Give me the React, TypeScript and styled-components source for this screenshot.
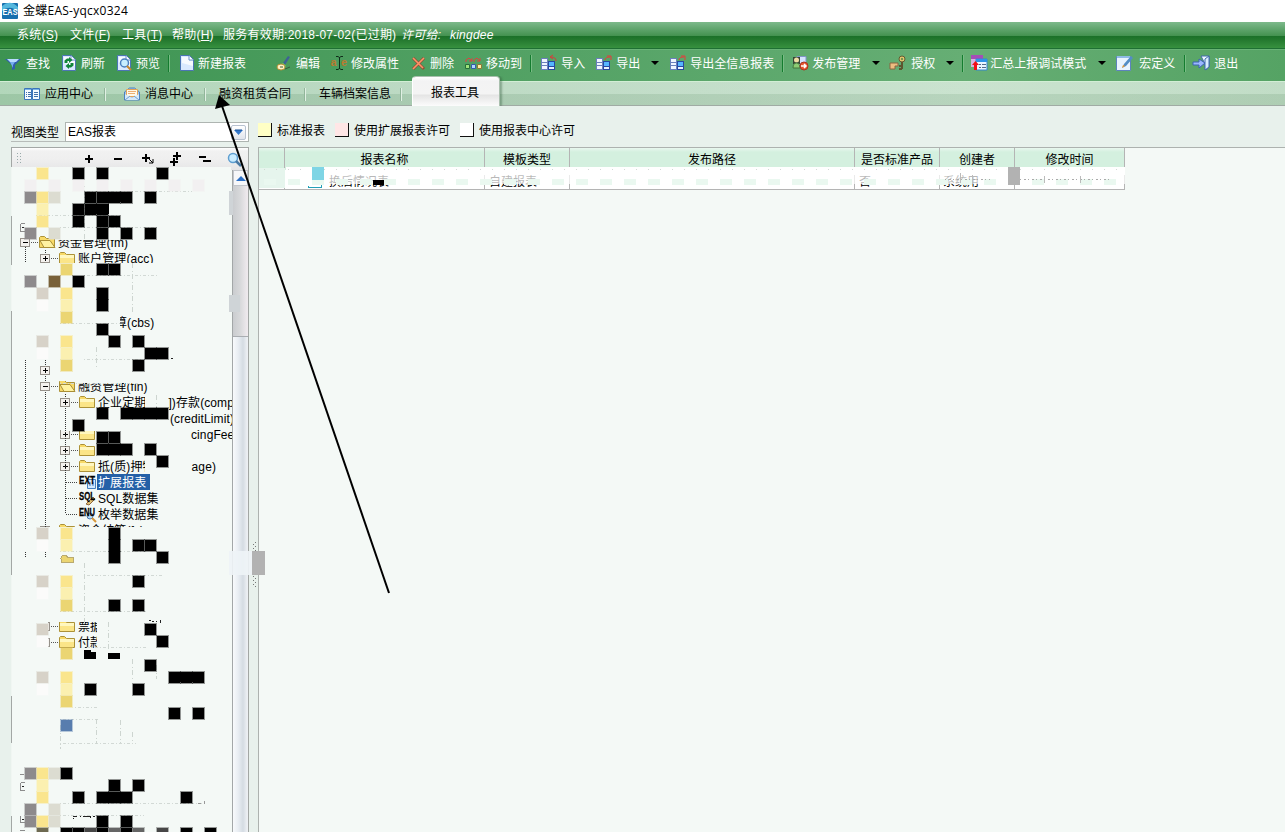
import React from "react";
import styled, { createGlobalStyle, css } from "styled-components";

const Global = createGlobalStyle`
  * { box-sizing: border-box; }
  body { margin: 0; overflow: hidden; }
  svg { display: block; flex-shrink: 0; }
`;

const Window = styled.div`
  position: relative;
  display: flex;
  flex-direction: column;
  width: 1285px;
  height: 832px;
  overflow: hidden;
  background: #e8f1ec;
  color: #000;
  font: 12px/16px "Liberation Sans", "Noto Sans CJK SC", sans-serif;
  white-space: nowrap;
`;

/* ---------- title and menu ---------- */
const TitleBar = styled.header`
  display: flex;
  align-items: center;
  flex: 0 0 22px;
  gap: 5px;
  padding-left: 2px;
  background: #fff;
  font: 12px/20px "Open Sans", "Noto Sans CJK SC", sans-serif;
  letter-spacing: 0.25px;
`;
const MenuBar = styled.nav`
  display: flex;
  flex: 0 0 27px;
  padding: 5px 0 0 17px;
  color: #fff;
  border-bottom: 1px solid #1f7034;
  background: linear-gradient(#7db98b 0, #43914f 14px, #1b7029 14px, #24792f 18px, #37913f 26px);
  letter-spacing: 0.22px;
`;
const MenuItem = styled.span<{ $w: number; $italic?: boolean }>`
  width: ${(p) => p.$w}px;
  font-style: ${(p) => (p.$italic ? "italic" : "normal")};
`;

/* ---------- toolbar ---------- */
const ToolBar = styled.div`
  display: flex;
  align-items: center;
  flex: 0 0 32px;
  padding: 0 0 5px 5px;
  color: #fff;
  border-top: 1px solid #69b377;
  background: linear-gradient(90deg, #3c9351 0, #50a062 36%, #66ae74 75%, #55a364 100%);
`;
const ToolButton = styled.span<{ $before: number; $gap: number }>`
  display: flex;
  align-items: center;
  height: 20px;
  margin-left: ${(p) => p.$before}px;
  gap: ${(p) => p.$gap}px;
`;
const ToolText = styled.span`
  padding-top: 2px;
`;
const ToolSeparator = styled.i<{ $before: number }>`
  width: 2px;
  height: 17px;
  margin-left: ${(p) => p.$before}px;
  background: linear-gradient(90deg, #147c2f 50%, #79bd85 50%);
`;
const Caret = styled.i<{ $before: number }>`
  margin-left: ${(p) => p.$before}px;
  border: 4px solid transparent;
  border-top-color: #000;
  border-bottom: 0;
`;

/* ---------- tabs ---------- */
const TabBar = styled.div`
  display: flex;
  flex: 0 0 25px;
  min-height: 0;
  padding-left: 12px;
  border-top: 1px solid #d2eed5;
  border-bottom: 1px solid #a0aba4;
  background: linear-gradient(rgba(255,255,255,0.14) 12px, rgba(0,30,0,0.05) 12px),
    linear-gradient(90deg, #a5d0af 0, #b3d4bb 36%, #c1dec7 75%, #b7d7bd 100%);
`;
const Tab = styled.div<{ $w: number; $pad: number; $active?: boolean }>`
  display: flex;
  align-items: center;
  width: ${(p) => p.$w}px;
  height: 23px;
  padding-left: ${(p) => p.$pad}px;
  gap: 5px;
  ${(p) =>
    p.$active
      ? css`
          height: 30px;
          margin: -6px 0 0 6px;
          padding-top: 2px;
          border: 1px solid #a9bfae;
          border-left-color: #fff;
          border-bottom: 0;
          border-radius: 4px 4px 0 0;
          background: linear-gradient(#fff 0, #f3f3f4 4px, #f4f4f4 17px, #e4e4e4 18px, #fcfcfc 29px);
          box-shadow: 2px 0 2px rgba(50, 90, 60, 0.4);
          clip-path: inset(0 -5px 0 -1px);
        `
      : css`
          background: linear-gradient(#91b59a, #91b59a) right 5px top 6px / 1px 13px no-repeat,
            linear-gradient(#e1f0e4, #e1f0e4) right 4px top 6px / 1px 13px no-repeat;
        `}
`;

/* ---------- left side ---------- */
const Body = styled.div`
  display: flex;
  flex: 1;
  min-height: 0;
`;
const Sidebar = styled.aside`
  display: flex;
  flex-direction: column;
  flex: 0 0 249px;
  min-width: 0;
  padding: 16px 0 0 11px;
`;
const FilterRow = styled.div`
  display: flex;
  flex: 0 0 20px;
  margin-bottom: 5px;
`;
const FilterLabel = styled.label`
  width: 54px;
  padding-top: 3px;
  border-bottom: 1px solid #b7bcb9;
`;
const Select = styled.div`
  display: flex;
  justify-content: space-between;
  align-items: center;
  flex: 1;
  padding: 0 2px;
  border: 1px solid #aeb5b1;
  background: #fff;
`;
const SelectArrow = styled.span`
  display: flex;
  align-items: center;
  justify-content: center;
  width: 15px;
  height: 15px;
  border: 1px solid #b8c2d0;
  border-radius: 2px;
  background: linear-gradient(#fff, #e1e5ed);
`;
const TreePanel = styled.section`
  display: flex;
  flex-direction: column;
  flex: 1;
  min-width: 0;
  min-height: 0;
  border: 1px solid #a3a7a5;
  border-bottom: 0;
  background: #f4f9f6;
`;
const TreeTools = styled.div`
  flex: 0 0 22px;
  background: linear-gradient(#fff, #f1f1f1 3px, #efefef 11px, #e6e6e7 22px);
`;
const TreeBody = styled.div`
  display: flex;
  flex: 1;
  min-width: 0;
  min-height: 0;
`;
const Tree = styled.div`
  flex: 1;
  min-width: 0;
  overflow: hidden;
`;
const TreeRow = styled.div<{ $depth: number }>`
  display: flex;
  align-items: center;
  height: 16px;
  padding-left: ${(p) => 8 + p.$depth * 20}px;
  letter-spacing: 0.1px;
`;
const Toggle = styled.span<{ $hidden?: boolean }>`
  display: flex;
  flex: 0 0 19px;
  height: 16px;
  align-items: center;
  visibility: ${(p) => (p.$hidden ? "hidden" : "visible")};
`;
const TreeLabel = styled.span<{ $selected?: boolean; $gap?: number }>`
  flex: none;
  height: 16px;
  margin-left: ${(p) => p.$gap ?? 0}px;
  padding: 0 ${(p) => (p.$selected ? 4 : 0)}px 0 1px;
  line-height: 18px;
  color: ${(p) => (p.$selected ? "#fff" : "#000")};
  background: ${(p) => (p.$selected ? "#2460a7" : "transparent")};
`;
const ScrollBar = styled.div`
  display: flex;
  flex-direction: column;
  flex: 0 0 16px;
  border-left: 1px solid #a3a7a8;
  background: linear-gradient(90deg, #f8fafc, #e9eef3 5px, #d5dce3 10px, #eceff3 14px);
`;
const ScrollUp = styled.span`
  display: flex;
  align-items: center;
  justify-content: center;
  height: 16px;
  border: 1px solid #c1c5cb;
  background: #f6f7f9;
`;
const ScrollThumb = styled.span`
  height: 151px;
  border-bottom: 1px solid #a9adb1;
  background: linear-gradient(90deg, #cacccf, #d7d8da 7px, #eee9ed 14px);
`;

/* ---------- report list ---------- */
const Content = styled.main`
  display: flex;
  flex-direction: column;
  flex: 1;
  min-width: 0;
  padding: 16px 0 0 9px;
`;
const Legend = styled.div`
  display: flex;
  flex: 0 0 25px;
  padding-top: 1px;
`;
const LegendItem = styled.span<{ $w: number }>`
  display: flex;
  gap: 5px;
  width: ${(p) => p.$w}px;
`;
const Swatch = styled.i<{ $color: string }>`
  width: 14px;
  height: 14px;
  border-right: 1px solid #111;
  border-bottom: 1px solid #111;
  background: ${(p) => p.$color};
`;
const Grid = styled.section`
  flex: 1;
  border-top: 1px solid #adb2af;
  border-left: 1px solid #adb2af;
  background: #f4f9f6;
`;
const GridRow = styled.div<{ $head?: boolean }>`
  display: grid;
  grid-template-columns: 26px 200px 85px 285px 85px 75px 110px;
  width: 866px;
  height: ${(p) => (p.$head ? 22 : 20)}px;
  text-align: ${(p) => (p.$head ? "center" : "left")};
  line-height: 24px;
  background: ${(p) => (p.$head ? "linear-gradient(#e9f7ef 0, #d4f0df 4px)" : "#fff")};
  border-bottom: ${(p) => (p.$head ? "0" : "1px solid #b4b4b4")};
`;
const Cell = styled.span<{ $pad?: number }>`
  overflow: hidden;
  padding-left: ${(p) => p.$pad ?? 0}px;
  border-right: 1px solid #b4b4b4;
`;
const Overlay = styled.svg`
  position: absolute;
  inset: 0;
  pointer-events: none;
`;

/* ---------- icons ---------- */
const sheet = (
  <>
    <path d="M1.5 .5h9l4 4v11h-13z" fill="#d9e9ff" stroke="#4c75b5" />
    <path d="M3 2h7v4h4v5L3 8z" fill="#f6faff" />
    <path d="M10 1v4h4" fill="#fff" stroke="#6d91c5" />
  </>
);
const table = (
  <>
    <path d="M0 3h7v12H0z" fill="#6a80bc" />
    <path d="M7 6h7v9H7z" fill="#2948a0" />
    <path d="M1 4h5v3H1zm0 4h5v2H1zm0 3h5v3H1z" fill="#f0f5ff" />
    <path d="M8 7h5v4H8z" fill="#55b6ff" />
    <path d="M8 12h5v2H8z" fill="#e9f3ff" />
  </>
);
const glyphs: Record<string, React.ReactNode> = {
  eas: (
    <>
      <rect width="16" height="16" rx="1" fill="#176fae" />
      <path d="M0 3Q8-4 16 4v5Q8 1 0 8" fill="#55b8de" />
      <text x="0.5" y="12" fontSize="8.5" textLength="15" lengthAdjust="spacingAndGlyphs" letterSpacing="0" fontWeight="700" fill="#fff" fontFamily="Liberation Sans">EAS</text>
    </>
  ),
  filter: (
    <>
      <path d="M0 4h16l-6 6v4l-3 1v-5z" fill="#315eac" />
      <path d="M2 4h12l-3 3H5z" fill="#b8dcff" />
      <path d="M5 7h5L8 10v3" fill="#75adf0" />
    </>
  ),
  refresh: (
    <>
      {sheet}
      <path d="M3.5 8V5.5L6 3.5h2V2l3.5 3L8 8V6H6.5v2zM12.5 8v2.500L10 12.500H8V14l-3.500-3L8 8v2h1.500V8z" fill="#11863a" />
    </>
  ),
  preview: (
    <>
      {sheet}
      <circle cx="8.5" cy="8" r="4" fill="#c7edff" stroke="#4a7fc0" strokeWidth="1.5" />
      <path d="m11 11 4 4" stroke="#c8852b" strokeWidth="2" />
    </>
  ),
  page: sheet,
  edit: (
    <>
      <path d="m12 1-5 7 2 2 5-8z" fill="#3e6394" />
      <path d="m7 8 3 3-2 1-3-2z" fill="#7ddb57" />
      <ellipse cx="5" cy="12" rx="4" ry="3" fill="#fff3c3" stroke="#af8e35" />
      <path d="M4 12h3M9 14l5-2" stroke="#365b3d" />
    </>
  ),
  rename: (
    <>
      <text x="-0.5" y="11" fontSize="11" fontWeight="700" fill="#b97a30" fontFamily="Liberation Sans">a</text>
      <text x="10" y="11" fontSize="11" fontWeight="700" fill="#b97a30" fontFamily="Liberation Sans">e</text>
      <path d="M5 1.5h2l1.500 1 1.500-1h2M8.500 2v12M5 14.500h2l1.500-1 1.500 1h2" stroke="#102d1a" fill="none" />
    </>
  ),
  remove: (
    <>
      <path d="m2 3 11 11M13 3 2 14" stroke="#8f5137" strokeWidth="3" />
      <path d="m2 3 10 10M13 3 2 14" stroke="#ff9368" strokeWidth="1.6" />
    </>
  ),
  move: (
    <>
      <path d="M1 7V5l3-2 3 3m0-3v3H4M9 7V5l3-2 3 3m0-3v3h-3" fill="none" stroke="#e04040" />
      <path d="M.5 9.500h4v4h-4z" fill="#9ee37a" stroke="#277039" />
      <path d="M6.500 9.500h4v4h-4z" fill="#b2d6ff" stroke="#345caa" />
      <path d="M12.500 9.500h4v4h-4z" fill="#fff0a0" stroke="#8e7838" />
    </>
  ),
  import: (
    <>
      {table}
      <path d="M15 6q0-4-5-4M12 0l-3 2 3 2" fill="none" stroke="#d73b3b" />
    </>
  ),
  export: (
    <>
      {table}
      <path d="M9 5q0-3 5-3M11 1h4v4" fill="none" stroke="#e73b3b" />
    </>
  ),
  publish: (
    <>
      <path d="M4 1.500h9v9H4z" fill="#d4e3ff" stroke="#8194c7" />
      <path d="M0 2h7v7H0z" fill="#374536" />
      <circle cx="3.5" cy="5" r="2.5" fill="#f1dda5" />
      <path d="M0 13q0-5 3.500-5T7 13z" fill="#8dcd75" stroke="#45763d" />
      <circle cx="11" cy="11" r="4" fill="#e65530" stroke="#a73523" />
      <path d="M8 11h5m-2-2 2 2-2 2" stroke="#fff" strokeWidth="1.5" fill="none" />
    </>
  ),
  key: (
    <>
      <circle cx="12" cy="4" r="3" fill="#dec46c" stroke="#625b32" />
      <path d="M12 7v7m0-3h-3m3 3H9" stroke="#5d552e" strokeWidth="2" />
      <path d="M0 8h8v3H5v3H0z" fill="#edbd80" stroke="#8c6540" />
      <circle cx="12" cy="4" r="1" fill="#558348" />
    </>
  ),
  report: (
    <>
      <path d="M0 0h12v12H0z" fill="#d7b4e1" />
      <path d="M0 0h12v4H0z" fill="#a54eb7" />
      <path d="M5 4h11v11H5z" fill="#eaf5ff" stroke="#3585d1" />
      <path d="M5 4h11v3H5z" fill="#2e94e7" />
      <path d="M8 9.500h2m1 0h4m-7 3h2m1 0h4" stroke="#536b8b" />
      <path d="M3 15V10H1l3.500-4L8 10H6v5z" fill="#f10f18" />
    </>
  ),
  macro: (
    <>
      <path d="M.5 1.500h14v14H.5z" fill="#e9f4ff" stroke="#5d83bd" />
      <path d="M1 1h13v2H1z" fill="#8fbae5" />
      <path d="m15 1-7 8-2 4 4-2 7-8z" fill="#538dc5" />
      <path d="m7 10-1 3 3-2" fill="#ef9a2b" />
    </>
  ),
  exit: (
    <>
      <path d="M8 1h8v11l-3 3-2-8z" fill="#edf6ff" stroke="#426bac" />
      <path d="M16 1v11l-4 3V4z" fill="#d9edff" stroke="#426bac" />
      <path d="M0 7h6V4l6 4-6 5v-3H0z" fill="#9bb8ff" stroke="#3d63b2" />
    </>
  ),
  apps: (
    <>
      <path d="M.5 2.500h7v11h-7zM8.500 2.500h7v11h-7z" fill="#f5fbff" stroke="#3b75ba" />
      <path d="M1 3.500h6M9 3.500h6" stroke="#79b4e6" />
      <path d="M2 6.500h1m1 0h3m-5 2h1m1 0h3m-5 2h1m1 0h3m3-4h4m-4 2h4m-4 2h4" stroke="#4170a9" />
    </>
  ),
  mail: (
    <>
      <path d="m.5 6 5-4h5l5 4v8H.5z" fill="#9fc4ed" stroke="#4b80bf" />
      <path d="M2.500 3.500h11v7h-11z" fill="#fff9e9" stroke="#e2a359" />
      <path d="M4 5.500h8M4 7.500h7" stroke="#edae74" />
      <path d="m1 8 7 4 7-4v6H1z" fill="#d4e8fa" />
      <path d="m1 14 5-4m9 4-5-4" stroke="#6e9dcf" />
    </>
  ),
};
const Icon = ({ name }: { name: string }) => (
  <svg width="16" height="16" viewBox="0 0 16 16" overflow="visible">{glyphs[name]}</svg>
);
const Down = () => (
  <svg width="9" height="6"><path d="M0 1h9L4.5 6z" fill="#3478cc" /><path d="M1 1h7" stroke="#134f96" /></svg>
);
const PlusMinus = ({ open }: { open?: boolean }) => (
  <svg width="19" height="16">
    <rect x="0.5" y="4.5" width="9" height="8" fill="#f4f2ee" stroke="#96918a" />
    <path d={open ? "M3 8.5h5" : "M3 8.5h5M5.5 6v5"} stroke="#000" />
    <path d="M11 8.5h7" stroke="#555" strokeDasharray="1 1" />
  </svg>
);
const Folder = ({ open }: { open?: boolean }) => (
  <svg width="18" height="16">
    <path d="M.5 13.5v-10l1-1h4l2 2h8v9z" fill="#f8da68" stroke="#ac9238" />
    {open ? (
      <path d="M1 6.5h10l5 7H5z" fill="#fff2a1" stroke="#a98e36" />
    ) : (
      <>
        <path d="M1 6h14v7H1z" fill="#fbe588" />
        <path d="M1 5h14v3H1z" fill="#fff7bf" />
      </>
    )}
  </svg>
);
const squeeze: Record<string, number> = { EXT: 0.75, SQL: 0.71, ENU: 0.69 };
const DataIcon = ({ kind }: { kind: string }) => (
  <svg width="18" height="16" overflow="visible">
    {kind === "EXT" && <path d="M8.5 5.5h8v9h-8zM11 8v4m3-4v4" fill="#d3e9ff" stroke="#4681c0" />}
    {kind === "SQL" && <path d="m14 7-7 7 3 1 6-6z" fill="#e6c275" stroke="#8e6940" />}
    {kind === "ENU" && <><circle cx="11" cy="10" r="3" fill="#b7dcfa" stroke="#4e7cb1" /><path d="m13 12 4 4" stroke="#d7973a" strokeWidth="2" /></>}
    <text transform={`scale(${squeeze[kind]} 1)`} x="0" y="10" fontSize="11" fontWeight="700" letterSpacing="0" stroke="#000" strokeWidth="0.3" fontFamily="Liberation Sans">{kind}</text>
  </svg>
);

type Tool = { kind?: "sep" | "caret"; before: number; gap?: number; icon?: string; text?: string };
const tools: Tool[] = [
  { before: 0, gap: 5, icon: "filter", text: "查找" },
  { before: 11, gap: 4, icon: "refresh", text: "刷新" },
  { before: 11, gap: 4, icon: "preview", text: "预览" },
  { kind: "sep", before: 8 },
  { before: 9, gap: 3, icon: "page", text: "新建报表" },
  { before: 30, gap: 4, icon: "edit", text: "编辑" },
  { before: 11, gap: 4, icon: "rename", text: "修改属性" },
  { before: 12, gap: 3, icon: "remove", text: "删除" },
  { before: 11, gap: 5, icon: "move", text: "移动到" },
  { kind: "sep", before: 8 },
  { before: 9, gap: 4, icon: "import", text: "导入" },
  { before: 11, gap: 4, icon: "export", text: "导出" },
  { kind: "caret", before: 11 },
  { before: 11, gap: 4, icon: "export", text: "导出全信息报表" },
  { kind: "sep", before: 8 },
  { before: 9, gap: 3, icon: "publish", text: "发布管理" },
  { kind: "caret", before: 12 },
  { before: 10, gap: 5, icon: "key", text: "授权" },
  { kind: "caret", before: 11 },
  { kind: "sep", before: 8 },
  { before: 7, gap: 3, icon: "report", text: "汇总上报调试模式" },
  { kind: "caret", before: 12 },
  { before: 10, gap: 7, icon: "macro", text: "宏定义" },
  { kind: "sep", before: 9 },
  { before: 7, gap: 5, icon: "exit", text: "退出" },
];

type Node = { depth: number; text?: string; open?: boolean; leaf?: string; folder?: boolean; rest?: string; gap?: number };
const nodes: (Node | null)[] = [
  null, null, null, null,
  { depth: 0, text: "资金管理(fm)", open: true },
  { depth: 1, text: "账户管理(acc)" },
  null, null, null,
  { depth: 2, folder: false, rest: "算(cbs)", gap: 35 },
  null, null,
  { depth: 1, folder: false },
  { depth: 1, text: "融资管理(fin)", open: true },
  { depth: 2, text: "企业定期", rest: "])存款(comp", gap: 21 },
  { depth: 2, folder: false, rest: "(creditLimit)", gap: 90 },
  { depth: 2, rest: "cingFee", gap: 93 },
  { depth: 2 },
  { depth: 2, text: "抵(质)押物", rest: "age)", gap: 36 },
  { depth: 2, text: "扩展报表", leaf: "EXT" },
  { depth: 2, text: "SQL数据集", leaf: "SQL" },
  { depth: 2, text: "枚举数据集", leaf: "ENU" },
  { depth: 1, text: "资金结算(fs)" },
  null, null, null, null, null,
  { depth: 1, text: "票据" },
  { depth: 1, text: "付款" },
];

/* Covered areas of the tree: x, y, width, height */
const covers = [
  [12, 167, 219, 69], [56, 236, 175, 4], [12, 263, 219, 53], [12, 310, 108, 50], [120, 331, 111, 29],
  [50, 355, 181, 26], [76, 381, 155, 2], [145, 395, 23, 13], [61, 408, 108, 23], [168, 427, 21, 12], [145, 456, 46, 18],
  [12, 527, 219, 30], [12, 564, 219, 58], [12, 622, 36, 38], [97, 618, 80, 42],
  [12, 650, 219, 182],
];

const inks: Record<string, string> = {
  k: "#000", g: "#8d8a8c", y: "#fae58d", l: "#fbf0b0", o: "#ebd572", b: "#d7d2c8",
  s: "#dcdcd1", w: "#fbfbfa", n: "#786139", u: "#587dae", f: "#f2f0f1", d: "#474747", m: "#656565", v: "#6e6a51",
};
/* Each string begins at x = 24 and advances one 12px cell per character. */
const mosaic: [number, string][] = [
  [167, ".y..k.k....k"],
  [179, "f.f.f.f.f.f.f.f"],
  [191, "gys..kkkk.k"],
  [203, ".l..kkk"],
  [215, ".y..k.kk"],
  [227, "g.s...k.k.k"],
  [263, "...o..kk"],
  [275, "g.n.k"],
  [287, ".b.y..k"],
  [299, ".w.l..k"],
  [311, "...o"],
  [323, "......k"],
  [335, ".b.y...k.k"],
  [347, ".w.l......kk"],
  [359, "...o.....k"],
  [407, "......k.kkkk"],
  [419, "....k"],
  [431, "......kk"],
  [443, "......kkk.k"],
  [455, "...........k"],
  [527, ".b.y...k"],
  [539, ".w.l...k.kk"],
  [551, ".......k...k"],
  [575, ".b.y.....k"],
  [587, ".w.l"],
  [599, "...o...k.k"],
  [623, ".b........k"],
  [635, ".w.........k"],
  [647, "...o"],
  [659, "..........k"],
  [671, ".b.y........kkk"],
  [683, ".w.l.k...k"],
  [695, "...o"],
  [707, "............k.k"],
  [719, "...u"],
  [767, "gysk"],
  [779, ".l.....k.k"],
  [791, ".y..k.kkk....k"],
  [803, "g.s"],
  [815, "gys...k.k"],
  [827, ".v.kkdkmkm.d.k.k"],
];

const Mosaic = () => (
  <Overlay width="1285" height="832" shapeRendering="crispEdges">
    {covers.map(([x, y, w, h], i) => <rect key={i} x={x} y={y} width={w} height={h} fill="#f4f9f6" />)}
    <path d="M11.5 167v49M11.5 265v46M11.5 575v121M11.5 743v73" stroke="#f0f6f2" />
    <path d="M25.5 247v16M45.5 250v4M45.5 360v6M45.5 376v6M25.5 360v170M45.5 392v136M65.5 394v4M65.5 408v106M25.5 552v6M45.5 552v6" stroke="#333" strokeDasharray="1 1" />
    <path d="M66 482.5h12M66 498.5h12M66 514.5h12" stroke="#444" strokeDasharray="1 1" />
    <path d="M84 191h108M36 215h84M60 227h98M84 275h74M60 323h60M84 359h58M60 383h80M60 551h87M84 575h79M60 611h86M84 647h62M75 707h24M60 719h38M60 743h76M60 803h145M60 815h84" stroke="#d2d9d5" strokeDasharray="1 2 3 2" />
    <path d="M84.5 239v-55M132.5 263v50M96.5 347v20M156.5 395v14M84.5 563v60M108.5 622v28M132.5 659v20M156.5 665v14M60.5 725v24M96.5 719v25M120.5 720v23M132.5 732v10" stroke="#cdd5d0" strokeDasharray="5 3 1 2" />
    {mosaic.map(([y, row]) =>
      row.split("").map((c, i) =>
        c === "." ? null : (
          <g key={`${y}-${i}`}>
            <rect x={24 + i * 12} y={y} width="13" height="13" fill={inks[c]} opacity="0.4" />
            <rect x={25 + i * 12} y={y + 1} width="11" height="11" fill={inks[c]} />
          </g>
        )
      )
    )}
    <path d="M97 192h23v11H97zM85 204h24v10H85zM97 192h35v10H97zM121 408h47v11h-47zM97 444h35v11H97zM169 672h35v10h-35zM97 792h35v11H97zM145 348h23v11h-23zM97 288h11v22H97zM109 528h11v34h-11z" fill="#000" />
    <path d="M61 562.5v-4q0-3 2-3h3l2 2h5v5z" fill="#ebd572" stroke="#b9aa70" />
    <path d="M84 650h7v2h5v7H84zM108 653h12v6h-12z" fill="#000" />
    <path d="M20.5 223.5v8m0-8h4m-4 8h4M20.5 782.5v8m0-8h4m-4 8h4M20.5 815.5v7h4M20.5 831v-1h4M20 774.5h4" stroke="#8c8c8c" fill="none" />
    <path d="M22 227.5h2M22 786.5h2M22 819.5h2M73 816.5h4m3 0h1m2 0h8m2 0h2M73 818v1m17-3v2M171 358.5h2M149 620h2m1 1h2m2 0h1m3-1v3" stroke="#222" fill="none" />
    <path d="M198 803.5h3m3 0v-3" stroke="#999" fill="none" />
    <path d="M229 191h4v24h-4zM229 295h11v17h-11z" fill="#cfd4d7" />
    <path d="M229 551h23v24h-23z" fill="#eef3f6" opacity="0.92" />
    <path d="M252 551h13v24h-13z" fill="#b2b2b2" />
    <path d="M253.5 544v7M255.5 542v9M253.5 576v10M255.5 578v9" stroke="#777" strokeDasharray="1 3" />

    <path d="M259 168h26v20h-26z" fill="#e6f5ed" />
    <path d="M286 167h839v8H286z" fill="#fff" />
    <path d="M286 175h839v9H286z" fill="#fff" opacity="0.72" />
    {Array.from({ length: 36 }, (_, i) => (
      <rect key={i} x={264 + i * 24} y="179" width="12" height="6" fill="#eaf8f0" />
    ))}
    <path d="M264 169.5h860" stroke="#d3d8d5" strokeDasharray="1 11" />
    <path d="M312 167h12v13h-12z" fill="#7fd5e5" />
    <path d="M308.5 186v1h13v-2" stroke="#239fb7" fill="none" />
    <path d="M373 180h11v5h-11z" fill="#000" />
    <path d="M1008 167h12v18h-12z" fill="#b2b2b2" />
    <path d="M945 179.5h45M1020 179.5h90" stroke="#aaa" strokeDasharray="1 3 2 2" />
    <path d="M960.5 173v10M972.5 175v9M1044.5 176v7M1080.5 176v7" stroke="#bbb" />
  </Overlay>
);

const TreeCommandIcons = () => (
  <svg width="236" height="22">
    <path d="M5.5 5v12M8.5 5v12" stroke="#9aa" strokeDasharray="1 2" />
    <g stroke="#000" strokeWidth="2" shapeRendering="crispEdges">
      <path d="M73 11h8M77 7v8M102 11h8M130 10h8M134 6v8M158 14h8M162 10v8M161 8h8M165 4v8M187 9h7M191 13h8" />
    </g>
    <path d="m137 11 4 4m0-4v4h-4" stroke="#000" fill="none" />
    <circle cx="221" cy="10" r="4.5" fill="#caecff" stroke="#5e9ed0" strokeWidth="1.5" />
    <path d="m224 13 5 5" stroke="#4b7aa4" strokeWidth="2.5" />
  </svg>
);

export default function App() {
  return (
    <Window>
      <Global />
      <TitleBar><Icon name="eas" />金蝶EAS-yqcx0324</TitleBar>
      <MenuBar>
        <MenuItem $w={53}>系统(<u>S</u>)</MenuItem>
        <MenuItem $w={52}>文件(<u>F</u>)</MenuItem>
        <MenuItem $w={50}>工具(<u>T</u>)</MenuItem>
        <MenuItem $w={51}>帮助(<u>H</u>)</MenuItem>
        <MenuItem $w={178}>服务有效期:2018-07-02(已过期)</MenuItem>
        <MenuItem $w={49} $italic>许可给:</MenuItem>
        <MenuItem $w={60} $italic>kingdee</MenuItem>
      </MenuBar>
      <ToolBar>
        {tools.map((t, i) =>
          t.kind === "sep" ? <ToolSeparator key={i} $before={t.before} /> :
          t.kind === "caret" ? <Caret key={i} $before={t.before} /> :
          <ToolButton key={i} $before={t.before} $gap={t.gap ?? 4}><Icon name={t.icon!} /><ToolText>{t.text}</ToolText></ToolButton>
        )}
      </ToolBar>
      <TabBar>
        <Tab $w={98} $pad={12}><Icon name="apps" />应用中心</Tab>
        <Tab $w={100} $pad={14}><Icon name="mail" />消息中心</Tab>
        <Tab $w={100} $pad={9}>融资租赁合同</Tab>
        <Tab $w={96} $pad={9}>车辆档案信息</Tab>
        <Tab $w={88} $pad={18} $active>报表工具</Tab>
      </TabBar>
      <Body>
        <Sidebar>
          <FilterRow>
            <FilterLabel>视图类型</FilterLabel>
            <Select>EAS报表<SelectArrow><Down /></SelectArrow></Select>
          </FilterRow>
          <TreePanel>
            <TreeTools><TreeCommandIcons /></TreeTools>
            <TreeBody>
              <Tree>
                {nodes.map((n, i) => (
                  <TreeRow key={i} $depth={n?.depth ?? 0}>
                    {n && (
                      <>
                        <Toggle $hidden={!!n.leaf || (n.folder === false && !!n.rest)}><PlusMinus open={n.open} /></Toggle>
                        {n.leaf ? <DataIcon kind={n.leaf} /> : n.folder !== false && <Folder open={n.open} />}
                        {n.text && <TreeLabel $selected={n.leaf === "EXT"}>{n.text}</TreeLabel>}
                        {n.rest && <TreeLabel $gap={n.gap}>{n.rest}</TreeLabel>}
                      </>
                    )}
                  </TreeRow>
                ))}
              </Tree>
              <ScrollBar>
                <ScrollUp><svg width="10" height="6"><path d="M0 6h10L5 1z" fill="#2d70c5" /></svg></ScrollUp>
                <ScrollThumb />
              </ScrollBar>
            </TreeBody>
          </TreePanel>
        </Sidebar>
        <Content>
          <Legend>
            <LegendItem $w={77}><Swatch $color="#ffffc5" />标准报表</LegendItem>
            <LegendItem $w={125}><Swatch $color="#ffe6e6" />使用扩展报表许可</LegendItem>
            <LegendItem $w={125}><Swatch $color="#fff" />使用报表中心许可</LegendItem>
          </Legend>
          <Grid>
            <GridRow $head>
              <Cell /><Cell>报表名称</Cell><Cell>模板类型</Cell><Cell>发布路径</Cell>
              <Cell>是否标准产品</Cell><Cell>创建者</Cell><Cell>修改时间</Cell>
            </GridRow>
            <GridRow>
              <Cell /><Cell $pad={44}>换后情况表</Cell><Cell $pad={4}>自建报表</Cell><Cell />
              <Cell $pad={4}>否</Cell><Cell $pad={3}>系统用</Cell><Cell />
            </GridRow>
          </Grid>
        </Content>
      </Body>
      <Mosaic />
      <Overlay width="1285" height="832">
        <path d="m221 103 168 490" stroke="#000" strokeWidth="2" />
        <path d="m219 95-4 14 15-4z" fill="#000" />
      </Overlay>
    </Window>
  );
}
